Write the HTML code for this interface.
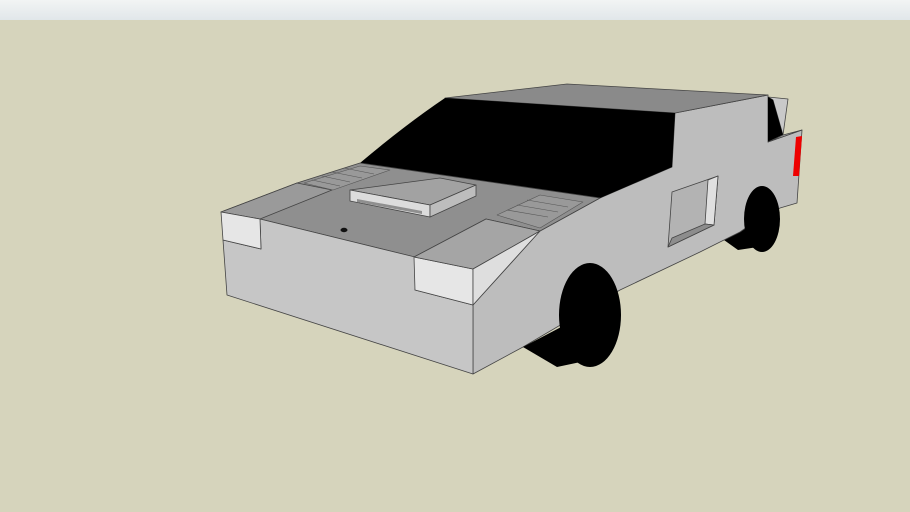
<!DOCTYPE html>
<html><head><style>
html,body{margin:0;padding:0;}
body{width:910px;height:512px;overflow:hidden;background:#d6d4bc;}
.top{position:absolute;left:0;top:0;width:910px;height:20px;background:linear-gradient(#f2f4f4,#e1e7ea);}
svg{position:absolute;left:0;top:0;}
</style></head><body>
<div class="top"></div>
<svg width="910" height="512" viewBox="0 0 910 512">
<g stroke="#444" stroke-width="0.8" stroke-linejoin="round">
<!-- rear wheel shadow -->
<polygon points="724,240 745,228 765,246 738,250" fill="#000" stroke="none"/>
<!-- side panel -->
<polygon points="675,113 768,95 768,142 802,130 797,203 780,208 760,218 740,232 700,252 620,290 523,347 473,374 473,305 540,231 600,198 672,167" fill="#bdbdbd"/>
<!-- rear wheel -->
<ellipse cx="762" cy="219" rx="18" ry="33" fill="#000" stroke="none"/>
<!-- rear spoiler -->
<polygon points="768,97 788,99 783,135 773,100" fill="#c9c9c9"/>
<polygon points="768,97 773,100 783,135 768,142" fill="#000" stroke="none"/>
<polygon points="783,135 802,130 768,142" fill="#a8a8a8"/>
<polygon points="796,137 802,136 799,176 793,176" fill="#e00" stroke="none"/>
<!-- side window -->
<polygon points="672,192 718,176 714,225 668,247" fill="#b3b3b3"/>
<polygon points="708,180 718,176 714,225 705,224" fill="#e0e0e0"/>
<polygon points="668,247 714,225 705,224 672,238" fill="#8d8d8d"/>
<!-- roof -->
<polygon points="445,98 567,84 768,95 675,113" fill="#8a8a8a"/>
<!-- windshield -->
<path d="M445,98 L675,113 L672,167 L600,198 L360,163 Q405,125 445,98 Z" fill="#000" stroke="none"/>
<!-- hood -->
<polygon points="221,212 297,183 360,163 600,198 540,231 486,219 414,257 260,219" fill="#8f8f8f"/>
<polygon points="221,212 297,183 332,190 260,219" fill="#9a9a9a"/>
<g fill="#999" stroke="#555" stroke-width="0.6">
<polygon points="304,183 360,166 390,170 333,190"/>
<line x1="312" y1="180" x2="340" y2="186"/><line x1="322" y1="176" x2="350" y2="182"/><line x1="332" y1="172" x2="362" y2="178"/><line x1="344" y1="168" x2="374" y2="174"/>
<polygon points="497,215 540,195 583,202 540,228"/>
<line x1="507" y1="210" x2="548" y2="217"/><line x1="517" y1="205" x2="558" y2="212"/><line x1="527" y1="200" x2="568" y2="207"/>
</g>
<!-- hood scoop -->
<polygon points="350,190 440,178 476,185 430,205" fill="#a2a2a2"/>
<polygon points="350,190 430,205 430,217 350,201" fill="#dcdcdc"/>
<polygon points="430,205 476,185 476,196 430,217" fill="#bdbdbd"/>
<polygon points="357,199 422,211 422,214 357,202" fill="#8f8f8f" stroke="none"/>
<ellipse cx="344" cy="230" rx="3.5" ry="2.2" fill="#111" stroke="none"/>
<!-- front face -->
<polygon points="223,240 261,249 260,219 415,257 415,290 473,305 473,374 227,295" fill="#c6c6c6"/>
<polygon points="221,212 260,219 261,249 223,240" fill="#e6e6e6"/>
<polygon points="414,257 473,269 473,305 415,290" fill="#e6e6e6"/>
<polygon points="414,257 486,219 540,231 473,269" fill="#a5a5a5"/>
<polygon points="473,269 540,231 473,305" fill="#dedede"/>
<!-- front wheel -->
<polygon points="523,347 565,325 590,360 557,367" fill="#000" stroke="none"/>
<ellipse cx="590" cy="315" rx="31" ry="52" fill="#000" stroke="none"/>
</g>
</svg>
</body></html>
